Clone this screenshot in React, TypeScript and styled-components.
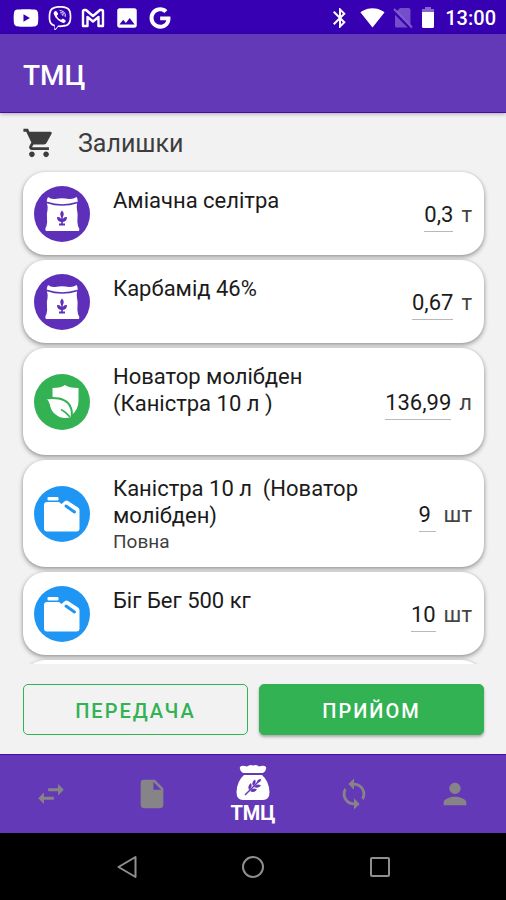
import React from "react";
import styled, { createGlobalStyle, css } from "styled-components";
import {
  MdBluetooth,
  MdImage,
  MdInsertDriveFile,
  MdPerson,
  MdShoppingCart,
  MdSignalWifi4Bar,
  MdSwapHoriz,
  MdSync,
} from "react-icons/md";
import { FaGoogle, FaViber, FaYoutube } from "react-icons/fa";

const color = {
  status: "#3700b3",
  primary: "#6439b7",
  edge: "#4c09a8",
  page: "#f2f2f2",
  green: "#32b253",
  blue: "#1f96f3",
  violet: "#5e2fb8",
  idle: "#878487",
};

const GlobalStyle = createGlobalStyle`
  * { box-sizing: border-box; }
  body {
    margin: 0;
    background: ${color.page};
    font-family: Roboto, "Noto Sans", sans-serif;
    color: #1b1b1b;
  }
  button, input { font: inherit; color: inherit; }
`;

const Screen = styled.div`
  display: flex;
  flex-direction: column;
  height: 100vh;
`;

const StatusBar = styled.div`
  display: flex;
  align-items: center;
  justify-content: space-between;
  height: 34px;
  flex: none;
  padding: 1px 10px 0 13px;
  background: ${color.status};
  color: #fff;
`;

const StatusGroup = styled.div<{ $gap: number }>`
  display: flex;
  align-items: center;
  gap: ${(p) => p.$gap}px;
`;

const Clock = styled.time`
  margin-left: 2px;
  font-size: 20px;
  font-weight: 500;
`;

const AppBar = styled.header`
  display: flex;
  align-items: center;
  height: 79px;
  flex: none;
  padding: 4px 23px 0;
  background: ${color.primary};
  border-bottom: 1px solid ${color.edge};
  box-shadow: 0 1px 4px rgba(0, 0, 0, 0.3);
  color: #fff;
`;

const AppTitle = styled.h1`
  margin: 0;
  font-size: 28px;
  font-weight: 500;
`;

const Main = styled.main`
  display: flex;
  flex-direction: column;
  flex: 1;
  min-height: 0;
`;

const SectionHeading = styled.h2`
  display: flex;
  align-items: center;
  gap: 22px;
  height: 55px;
  flex: none;
  margin: 0;
  padding: 5px 22px 0;
  font-size: 25px;
  font-weight: 400;
  color: #3d3d3d;
`;

const StockList = styled.ul`
  display: flex;
  flex-direction: column;
  gap: 5px;
  flex: 1;
  min-height: 0;
  margin: 0;
  padding: 4px 22px 0 23px;
  overflow: hidden;
  list-style: none;
`;

const Card = styled.li`
  display: flex;
  align-items: center;
  gap: 23px;
  flex: none;
  min-height: 83px;
  padding: 14px 12px 13px 11px;
  border-radius: 22px;
  background: #fff;
  box-shadow: 0 2px 4px 1px rgba(0, 0, 0, 0.24), 0 1px 3px rgba(0, 0, 0, 0.16);
`;

const Badge = styled.svg`
  width: 56px;
  height: 56px;
  flex: none;
`;

const CardText = styled.div`
  flex: 1;
  min-width: 0;
  align-self: flex-start;
`;

const ItemName = styled.label`
  display: block;
  padding-top: 1px;
  font-size: 22px;
  line-height: 27px;
  white-space: pre-wrap;
`;

const ItemNote = styled.div`
  min-height: 25px;
  padding-top: 1px;
  font-size: 19px;
  line-height: 24px;
  color: #3f3f3f;
`;

const Quantity = styled.div`
  display: flex;
  align-items: center;
  gap: 8px;
  flex: none;
  font-size: 22px;
`;

const Amount = styled.input`
  field-sizing: content;
  min-width: 17px;
  height: 36px;
  padding: 2px 0 0;
  border: 0;
  border-bottom: 1px solid #b9b9b9;
  background: none;
  outline: none;
`;

const Unit = styled.span`
  color: #444;
`;

const Actions = styled.div`
  display: grid;
  grid-template-columns: 1fr 1fr;
  gap: 11px;
  flex: none;
  padding: 20px 22px 19px 23px;
`;

const ActionButton = styled.button<{ $filled?: boolean }>`
  height: 51px;
  padding: 2px 0 0;
  border: 1px solid ${color.green};
  border-radius: 5px;
  background: none;
  color: ${color.green};
  font-size: 20px;
  font-weight: 500;
  letter-spacing: 2px;
  cursor: pointer;
  ${(p) =>
    p.$filled &&
    css`
      background: ${color.green};
      color: #fff;
      box-shadow: 0 2px 3px rgba(0, 0, 0, 0.3);
    `}
`;

const TabBar = styled.nav`
  display: grid;
  grid-template-columns: repeat(5, 1fr);
  height: 79px;
  flex: none;
  background: ${color.primary};
  border-top: 1px solid ${color.edge};
`;

const Tab = styled.button<{ $active?: boolean }>`
  display: flex;
  flex-direction: column;
  align-items: center;
  justify-content: center;
  padding: 0;
  border: 0;
  background: none;
  color: ${(p) => (p.$active ? "#fff" : color.idle)};
  font-size: 20px;
  line-height: 22px;
  font-weight: 700;
  cursor: pointer;
`;

const SystemBar = styled.div`
  display: grid;
  grid-template-columns: repeat(3, 25%);
  justify-content: center;
  height: 67px;
  flex: none;
  background: #000;
`;

const SystemButton = styled.button`
  display: flex;
  align-items: center;
  justify-content: center;
  padding: 0;
  border: 0;
  background: none;
  color: #8f8f8f;
  cursor: pointer;
`;

const GmailIcon = () => (
  <svg width="24" height="20" viewBox="0 0 24 20" fill="none" stroke="#fff" strokeWidth="2.400" strokeLinejoin="round">
    <path d="M2 18V3.500Q2 2 3.500 2H5L12 8L19 2H20.500Q22 2 22 3.500V18H17.500V9L12 13.500L6.500 9V18Z" />
  </svg>
);

const NoSimIcon = () => (
  <svg width="20" height="22" viewBox="0 0 20 22">
    <path d="M7 1H15.500Q17.500 1 17.500 3V19Q17.500 20.500 16 20.500H3.500Q2 20.500 2 19V6Z" fill="#fff" opacity=".3" />
    <path d="M0 3L18 21" stroke={color.status} strokeWidth="4" />
    <path d="M1 2L19 20.500" stroke="#fff" strokeWidth="2" opacity=".35" />
  </svg>
);

const BatteryIcon = () => (
  <svg width="14" height="23" viewBox="0 0 14 23">
    <path d="M4 1H10V3H13V7H1V3H4Z" fill="#fff" opacity=".4" />
    <path d="M1 6H13V20.500Q13 22 11.500 22H2.500Q1 22 1 20.500Z" fill="#fff" />
  </svg>
);

const SackBadge = () => (
  <Badge viewBox="0 0 56 56" aria-hidden="true">
    <circle cx="28" cy="28" r="28" fill={color.violet} />
    <path
      d="M14 11Q17 13.500 21 13Q28 11.500 35 13Q39 13.500 42.500 11Q44.500 14 43 17.500Q42.500 21 43 24Q44 28 43.500 32Q43 36 44 40Q46 43 45 45H12Q10.500 43 12.500 40Q13.500 36 13 32Q12.500 28 13.500 24Q14 21 13 17.500Q12 14 14 11Z"
      fill="#fff"
    />
    <path d="M13 16.500Q28 21.500 43.500 16.500" fill="none" stroke={color.violet} strokeWidth="1.500" />
    <g fill={color.violet}>
      <path d="M28 24.500Q31 27.500 28.800 31H27.200Q25 27.500 28 24.500Z" />
      <path d="M27.200 30H28.800V33Q30 30.500 33 31Q33 35.500 28.800 36V37.500H31V39.500H25V37.500H27.200V36Q23 35.500 23 31Q26 30.500 27.200 33Z" />
    </g>
  </Badge>
);

const ShieldLeafBadge = () => (
  <Badge viewBox="0 0 56 56" aria-hidden="true">
    <circle cx="28" cy="28" r="28" fill={color.green} />
    <path
      d="M31 11Q34.500 14 44.500 14V27Q44.500 36 37 41.500Q25 38 18.500 25V14Q27.500 14 31 11Z"
      fill="#fff"
    />
    <path
      d="M11 24.500Q32 22 36.500 33Q38.500 37 37.500 44Q27 47 20 40.500Q15.500 36 15 31Q14 27 11 24.500Z"
      fill="#fff"
      stroke={color.green}
      strokeWidth="2"
    />
    <path d="M27 35.500Q32 38 36 43" fill="none" stroke={color.green} strokeWidth="1.500" />
  </Badge>
);

const CanisterBadge = () => (
  <Badge viewBox="0 0 56 56" aria-hidden="true">
    <circle cx="28" cy="28" r="28" fill={color.blue} />
    <rect x="13.500" y="11" width="11" height="3.500" rx="1" fill="#fff" />
    <path
      d="M13 16H25L27.500 18L31 15Q32.500 14 34 15L44 21.500Q45.500 22.500 45.500 24.500V42.500Q45.500 45.500 42.500 45.500H13Q10 45.500 10 42.500V19Q10 16 13 16Z"
      fill="#fff"
    />
    <path d="M32 20L40.500 26" stroke={color.blue} strokeWidth="3" strokeLinecap="round" />
  </Badge>
);

const GrainBagIcon = () => (
  <svg width="36" height="38" viewBox="0 0 36 38" aria-hidden="true">
    <path
      d="M8 9Q4 6 5 3Q7 1 12 2.500Q15 0 18 1.500Q22 0 24 2.500Q29 1 31 3Q32 6 28 9Z"
      fill="#fff"
    />
    <path
      d="M9 11H27Q34 17 34.500 28Q34.500 36 28 36H8Q1.500 36 1.500 28Q2 17 9 11Z"
      fill="#fff"
    />
    <path d="M10 31L24 17" stroke={color.primary} strokeWidth="1.500" />
    <g fill={color.primary}>
      <path d="M14 26Q12 22 16 19Q18 23 14 26Z" />
      <path d="M18 22Q16 18 20 15.500Q22 19 18 22Z" />
      <path d="M15 27Q19 29.500 22 25.500Q18 23 15 27Z" />
      <path d="M19 23Q23 25 26 21.500Q22 19 19 23Z" />
      <path d="M22 18.500Q22 15 26 15Q26 19 22 18.500Z" />
    </g>
  </svg>
);

type Kind = "sack" | "shield" | "canister";

const badges: Record<Kind, React.FC> = {
  sack: SackBadge,
  shield: ShieldLeafBadge,
  canister: CanisterBadge,
};

const stock: { kind: Kind; name: string; note?: string; amount: string; unit: string }[] = [
  { kind: "sack", name: "Аміачна селітра", amount: "0,3", unit: "т" },
  { kind: "sack", name: "Карбамід 46%", amount: "0,67", unit: "т" },
  { kind: "shield", name: "Новатор молібден (Каністра 10 л )", amount: "136,99", unit: "л" },
  { kind: "canister", name: "Каністра 10 л  (Новатор молібден)", note: "Повна", amount: "9", unit: "шт" },
  { kind: "canister", name: "Біг Бег 500 кг", amount: "10", unit: "шт" },
];

export default function App() {
  return (
    <Screen>
      <GlobalStyle />
      <StatusBar>
        <StatusGroup $gap={9}>
          <FaYoutube size={26} />
          <FaViber size={24} />
          <GmailIcon />
          <MdImage size={26} />
          <FaGoogle size={22} />
        </StatusGroup>
        <StatusGroup $gap={8}>
          <MdBluetooth size={24} />
          <MdSignalWifi4Bar size={25} />
          <NoSimIcon />
          <BatteryIcon />
          <Clock>13:00</Clock>
        </StatusGroup>
      </StatusBar>
      <AppBar>
        <AppTitle>ТМЦ</AppTitle>
      </AppBar>
      <Main>
        <SectionHeading>
          <MdShoppingCart size={34} />
          Залишки
        </SectionHeading>
        <StockList>
          {stock.map((item, i) => {
            const Icon = badges[item.kind];
            return (
              <Card key={item.name}>
                <Icon />
                <CardText>
                  <ItemName htmlFor={`amount-${i}`}>{item.name}</ItemName>
                  <ItemNote>{item.note}</ItemNote>
                </CardText>
                <Quantity>
                  <Amount id={`amount-${i}`} defaultValue={item.amount} inputMode="decimal" />
                  <Unit>{item.unit}</Unit>
                </Quantity>
              </Card>
            );
          })}
          <Card aria-hidden="true" />
        </StockList>
        <Actions>
          <ActionButton type="button">ПЕРЕДАЧА</ActionButton>
          <ActionButton type="button" $filled>
            ПРИЙОМ
          </ActionButton>
        </Actions>
      </Main>
      <TabBar>
        <Tab type="button" aria-label="Переміщення">
          <MdSwapHoriz size={34} />
        </Tab>
        <Tab type="button" aria-label="Документи">
          <MdInsertDriveFile size={34} />
        </Tab>
        <Tab type="button" $active>
          <GrainBagIcon />
          ТМЦ
        </Tab>
        <Tab type="button" aria-label="Синхронізація">
          <MdSync size={34} />
        </Tab>
        <Tab type="button" aria-label="Профіль">
          <MdPerson size={34} />
        </Tab>
      </TabBar>
      <SystemBar>
        <SystemButton type="button" aria-label="Назад">
          <svg width="24" height="24" viewBox="0 0 24 24" fill="none" stroke="currentColor" strokeWidth="2" strokeLinejoin="round">
            <path d="M20.500 2V22L3.500 12Z" />
          </svg>
        </SystemButton>
        <SystemButton type="button" aria-label="Додому">
          <svg width="24" height="24" viewBox="0 0 24 24" fill="none" stroke="currentColor" strokeWidth="2">
            <circle cx="12" cy="12" r="10" />
          </svg>
        </SystemButton>
        <SystemButton type="button" aria-label="Огляд">
          <svg width="24" height="24" viewBox="0 0 24 24" fill="none" stroke="currentColor" strokeWidth="2">
            <rect x="3" y="3" width="18" height="18" rx="1" />
          </svg>
        </SystemButton>
      </SystemBar>
    </Screen>
  );
}
